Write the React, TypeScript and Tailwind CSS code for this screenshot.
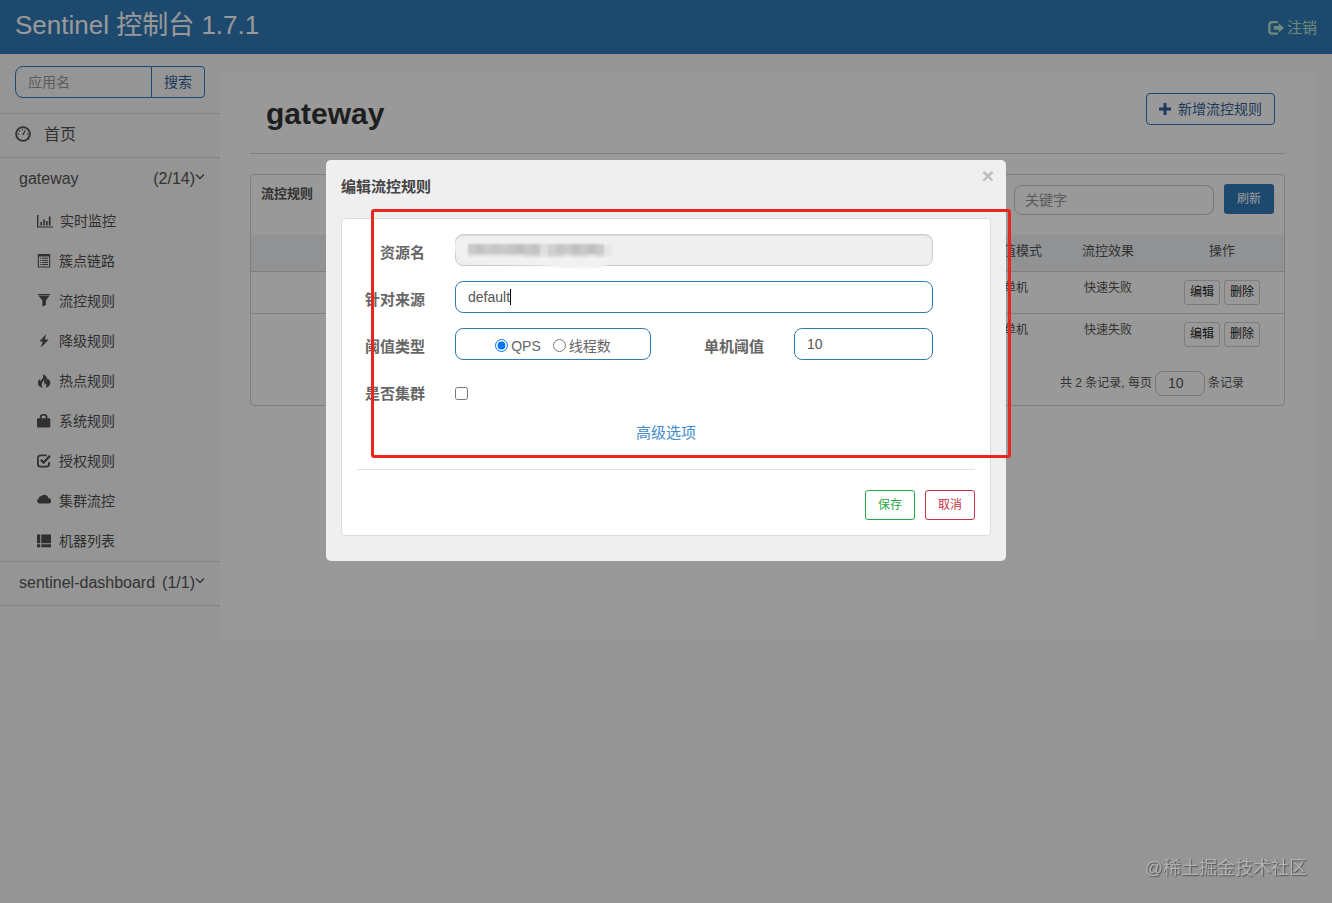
import type { ReactNode } from "react";

function Glyph({ children, className = "h-[14px] w-[14px]" }: { children: ReactNode; className?: string }) {
  return (
    <svg viewBox="0 0 14 14" className={`shrink-0 ${className}`} fill="currentColor" aria-hidden="true">
      {children}
    </svg>
  );
}

const menu: { label: string; icon: ReactNode }[] = [
  {
    label: "实时监控",
    icon: (
      <Glyph className="h-[14px] w-4">
        <path d="M-1 1h1.4v11.4H15v1H-1zM2.4 8h1.6v3.4H2.4zM5.2 5.6h1.6v5.8H5.2zM8 7h1.6v4.4H8zM10.8 2.4h1.8v9h-1.8z" />
      </Glyph>
    ),
  },
  {
    label: "簇点链路",
    icon: (
      <Glyph>
        <path fillRule="evenodd" d="M.8 0h12.4v13.600H.8zM1.9 2.4v10.100h10.2V2.4z" />
        <path d="M3 3.800h1.2v1H3zM5 3.800h6v1H5zM3 5.900h1.2v1H3zM5 5.900h6v1H5zM3 8h1.2v1H3zM5 8h6v1H5zM3 10.100h1.2v1H3zM5 10.100h6v1H5z" />
      </Glyph>
    ),
  },
  {
    label: "流控规则",
    icon: (
      <Glyph>
        <path d="M1.2 0h11.600v1.200H1.200zM1.600 1.700h10.800L8.900 6.500v4.400L5.400 12.600V6.500z" />
      </Glyph>
    ),
  },
  {
    label: "降级规则",
    icon: (
      <Glyph>
        <path d="M9.200 0 2.400 7.600h3.400L3.800 13.800l7.900-8.400H7.800z" />
      </Glyph>
    ),
  },
  {
    label: "热点规则",
    icon: (
      <Glyph>
        <path d="M6 0c3.900 1.800 4.500 4.400 3.400 6.900.7-.4 1-1.400.8-2.600C12.600 5.700 13.600 7.700 13.200 9.800c-.4 2.200-2.300 3.400-4.700 4.200 1.100-1.600 1.200-3.100.2-4.700-.4.900-.9 1.300-1.600 1.400.600-1.700.400-3.600-.700-5C6.200 7.500 4.700 8.700 4.800 10.800c0 1.200.5 2.200 1.300 3.200C2.900 13.300.8 11.500.9 9c0-1.500.7-2.700 1.900-3.900 0 1 .1 1.700.6 2.200C4.800 5.200 7.200 3.500 6 0z" />
      </Glyph>
    ),
  },
  {
    label: "系统规则",
    icon: (
      <Glyph>
        <path
          fillRule="evenodd"
          d="M2.800 4.200V3C2.800.9 4.300 0 5.600 0h2c1.500 0 2.900.9 2.900 3v1.200h1.600c.7 0 1.200.5 1.200 1.200v7c0 .7-.5 1.200-1.200 1.200H1.200C.5 13.600 0 13.100 0 12.400v-7c0-.7.5-1.200 1.200-1.200zM4.700 4.200h3.900V3c0-.9-.5-1.300-1.200-1.300H5.800c-.7 0-1.100.4-1.100 1.300z"
        />
      </Glyph>
    ),
  },
  {
    label: "授权规则",
    icon: (
      <Glyph>
        <path d="M9.800 1.300H3.600A2.700 2.700 0 0 0 .9 4v6a2.700 2.700 0 0 0 2.700 2.700h5.800a2.700 2.700 0 0 0 2.700-2.700V8" fill="none" stroke="currentColor" strokeWidth="1.800" />
        <path d="m3.800 5.800 2.800 2.800 6.400-6.800" fill="none" stroke="currentColor" strokeWidth="2.200" />
      </Glyph>
    ),
  },
  {
    label: "集群流控",
    icon: (
      <Glyph>
        <path d="M2.600 9.600A2.600 2.600 0 0 1 2 4.500 2.200 2.200 0 0 1 4.700 2a3.900 3.900 0 0 1 6.700 2.200A2.700 2.700 0 0 1 11.600 9.600z" />
      </Glyph>
    ),
  },
  {
    label: "机器列表",
    icon: (
      <Glyph>
        <path d="M0 .4h3.200v8.800H0zM4.300.4H14v8.800H4.300zM0 10.300h3.200v3H0zM4.300 10.300H14v3H4.300z" />
      </Glyph>
    ),
  },
];

function Chevron() {
  return (
    <svg viewBox="0 0 10 8" className="mb-1 h-2 w-[10px]" fill="none" stroke="currentColor" strokeWidth="1.300" aria-hidden="true">
      <path d="m1 1.500 4 4 4-4" />
    </svg>
  );
}

function AppRow({ name, count }: { name: string; count: string }) {
  return (
    <a href="#" className="flex h-[43px] items-center pr-[15px] pb-[2px] pl-[19px] text-base text-[#555]">
      <span>{name}</span>
      <span className="ml-auto">{count}</span>
      <Chevron />
    </a>
  );
}

function Sidebar() {
  return (
    <nav className="w-[220px] shrink-0">
      <form className="flex px-[15px] pt-3 pb-[15px]">
        <input
          aria-label="应用名"
          placeholder="应用名"
          className="h-8 w-0 flex-1 rounded-l-lg border border-[#337ab7] px-3 text-sm placeholder:text-[#999]"
        />
        <button type="button" className="-ml-px h-8 rounded-r border border-[#337ab7] px-3 text-sm text-[#2f6399]">
          搜索
        </button>
      </form>
      <a href="#" className="flex h-11 items-center gap-[13px] border-t border-[#dcdcdc] px-[15px] pb-[2px] text-base text-[#555]">
        <Glyph className="mb-[2px] h-4 w-4">
          <circle cx="7" cy="7" r="6" fill="none" stroke="currentColor" strokeWidth="1.700" />
          <path d="M6.300 7.700 8.500 3.500l.9.500-1.900 4.200zM2.500 6.500h1.200v1.100H2.500zM3.600 3.900h1.100V5H3.600zM6 2.700h1v1H6zM10.300 6.500h1.200v1.100h-1.200z" />
        </Glyph>
        首页
      </a>
      <div className="border-t border-[#dcdcdc]">
        <AppRow name="gateway" count="(2/14)" />
        <ul>
          {menu.map((m, i) => (
            <li key={m.label}>
              <a href="#" className={`flex h-10 items-center pl-[37px] text-sm text-[#505050] ${i === 0 ? "gap-[7px]" : "gap-2"}`}>
                {m.icon}
                {m.label}
              </a>
            </li>
          ))}
        </ul>
      </div>
      <div className="border-y border-[#dcdcdc]">
        <AppRow name="sentinel-dashboard" count="(1/1)" />
      </div>
    </nav>
  );
}

function RuleTable() {
  return (
    <table className="w-full table-fixed border-collapse text-center text-xs leading-[17px] text-[#555]">
      <colgroup>
        <col />
        <col className="w-20" />
        <col className="w-[104px]" />
        <col className="w-[124px]" />
      </colgroup>
      <thead className="bg-[#f0f4f6] text-[13px]">
        <tr className="h-9 border-b border-[#d4d4d4]">
          <td />
          <th className="pb-1 font-normal whitespace-nowrap">阈值模式</th>
          <th className="pb-1 font-normal">流控效果</th>
          <th className="pb-1 font-normal">操作</th>
        </tr>
      </thead>
      <tbody>
        {[0, 1].map((r) => (
          <tr key={r} className="border-b border-[#d4d4d4] align-top last:border-0">
            <td />
            <td className="py-2">单机</td>
            <td className="py-2">快速失败</td>
            <td className="py-2">
              <div className="flex justify-center gap-1">
                {["编辑", "删除"].map((b) => (
                  <button key={b} type="button" className="h-[25px] rounded-[3px] border border-[#d0d0d0] px-[5px] text-xs text-[#222]">
                    {b}
                  </button>
                ))}
              </div>
            </td>
          </tr>
        ))}
      </tbody>
    </table>
  );
}

function Main() {
  return (
    <main className="mt-[18px] mr-4 min-h-[568px] min-w-0 flex-1 self-start bg-white pr-[31px] pl-[30px]">
      <div className="flex items-start justify-between border-b border-[#d8d8d8] pt-[21px] pr-[10px] pb-[21px] pl-4">
        <h1 className="pt-[3px] text-[30px] leading-9 font-bold text-[#333]">gateway</h1>
        <button type="button" className="flex h-8 items-center gap-[7px] rounded border border-[#337ab7] px-3 text-sm text-[#2f6399]">
          <Glyph className="h-3 w-3">
            <path d="M5.300 0h3.400v5.300H14v3.400H8.700V14H5.300V8.700H0V5.300h5.300z" />
          </Glyph>
          新增流控规则
        </button>
      </div>
      <section className="mt-5 rounded border border-[#d4d4d4]">
        <div className="flex h-[60px] items-start px-[10px] pt-[9px]">
          <h2 className="text-[13px] leading-5 font-bold text-[#555]">流控规则</h2>
          <input
            aria-label="关键字"
            placeholder="关键字"
            className="mt-px mr-[10px] ml-auto h-[30px] w-[200px] rounded-lg border border-[#c8c8c8] px-[10px] text-sm placeholder:text-[#999]"
          />
          <button type="button" className="h-[30px] w-[50px] rounded-[3px] bg-[#337ab7] text-xs text-white">
            刷新
          </button>
        </div>
        <RuleTable />
        <div className="flex items-center justify-end gap-[3px] pt-4 pr-10 pb-[9px] text-xs text-[#555]">
          <label htmlFor="page-size">共 2 条记录, 每页</label>
          <input id="page-size" defaultValue="10" className="h-[25px] w-[50px] rounded-lg border border-[#c8c8c8] px-3 text-sm" />
          <span>条记录</span>
        </div>
      </section>
    </main>
  );
}

const mosaic = [
  "#c9c9c9", "#c2c2c2", "#cbcbcb", "#c6c6c6", "#c9c9c9", "#c4c4c4", "#bebebe", "#c8c8c8", "#c3c3c3", "#dedede",
  "#cfcfcf", "#c5c5c5", "#c9c9c9", "#c0c0c0", "#c7c7c7", "#bfbfbf", "#c9c9c9",
];

function MaskedValue() {
  return (
    <svg viewBox="0 0 170 36" className="pointer-events-none absolute top-0 left-0 h-9 w-[170px]" aria-hidden="true">
      <defs>
        <filter id="soft" x="-10%" y="-30%" width="120%" height="160%">
          <feGaussianBlur stdDeviation="0.900" />
        </filter>
      </defs>
      <path d="M-1 9C4 4 10 6 14 7h138q6 2 5 12c-1 9-6 14-14 15-18 1-38 0-60-3L10 28Q-1 24-1 9z" fill="#f1f1f1" filter="url(#soft)" />
      <g filter="url(#soft)">
        {mosaic.map((c, i) => (
          <g key={i}>
            <rect x={13 + i * 8} y="10" width="8" height="12" fill={c} />
            <rect x={13 + i * 8} y="20" width="8" height="3" fill={i > 5 && i % 3 ? "#d6d6d6" : "#e2e2e2"} />
          </g>
        ))}
        <rect x="149" y="11" width="8" height="12" fill="#e6e6e6" />
      </g>
    </svg>
  );
}

const labelClass = "w-[68px] shrink-0 pt-2 text-right text-[15px] leading-[22px] font-bold whitespace-nowrap text-[#666]";
const fieldClass = "h-8 w-full rounded-lg border border-[#337ab7] bg-white px-3 text-sm text-[#555]";

function EditDialog() {
  return (
    <div
      role="dialog"
      aria-labelledby="dialog-title"
      className="relative mx-auto mt-40 w-[680px] max-w-full rounded-[5px] bg-[#efefef] px-[15px] pb-[25px]"
    >
      <div className="flex h-[58px] items-start justify-between">
        <h2 id="dialog-title" className="pt-4 text-[15px] leading-[22px] font-bold text-[#444]">
          编辑流控规则
        </h2>
        <button type="button" aria-label="关闭" className="mt-[6px] mr-[-3px] text-[21px] leading-5 font-bold text-[#bdbdbd]">
          ×
        </button>
      </div>
      <form className="rounded border border-[#dcdcdc] bg-white p-[15px]">
        <div className="flex flex-col gap-[15px] pr-[42px]">
          <div className="flex gap-[30px]">
            <label htmlFor="resource" className={labelClass}>资源名</label>
            <div className="relative flex-1">
              <input id="resource" readOnly className="h-8 w-full rounded-lg border border-[#ccc] bg-[#eee] px-3 text-sm shadow-[inset_0_1px_1px_rgba(0,0,0,0.075)]" />
              <MaskedValue />
            </div>
          </div>
          <div className="flex gap-[30px]">
            <label htmlFor="origin" className={labelClass}>针对来源</label>
            <div className="relative flex-1">
              <input id="origin" defaultValue="default" className={fieldClass} />
              <span className="absolute top-2 left-[55px] h-4 w-px bg-black" />
            </div>
          </div>
          <div className="flex gap-[30px]">
            <span className={labelClass}>阈值类型</span>
            <div className="flex flex-1 items-start justify-between">
              <div role="radiogroup" aria-label="阈值类型" className="flex h-8 w-[196px] items-center justify-center gap-3 rounded-lg border border-[#337ab7] pt-1 text-sm text-[#666]">
                <label className="flex items-center gap-[3px]">
                  <input type="radio" name="grade" defaultChecked className="mb-[2px] h-[13px] w-[13px]" />
                  QPS
                </label>
                <label className="flex items-center gap-[3px]">
                  <input type="radio" name="grade" className="mb-[2px] h-[13px] w-[13px]" />
                  线程数
                </label>
              </div>
              <div className="flex gap-[30px]">
                <label htmlFor="threshold" className={labelClass}>单机阈值</label>
                <div className="w-[139px]">
                  <input id="threshold" defaultValue="10" className={fieldClass} />
                </div>
              </div>
            </div>
          </div>
          <div className="flex h-8 gap-[30px]">
            <label htmlFor="cluster" className={labelClass}>是否集群</label>
            <input id="cluster" type="checkbox" className="mt-3 h-[13px] w-[13px]" />
          </div>
        </div>
        <div className="border-b border-[#e2e2e2] pt-[15px] pb-[25px] text-center text-[15px] leading-[22px]">
          <a href="#" className="text-[#428bca]">高级选项</a>
        </div>
        <div className="mt-5 flex justify-end gap-[10px]">
          <button type="button" className="h-[30px] w-[50px] rounded-[3px] border border-[#28a745] text-xs text-[#28a745]">
            保存
          </button>
          <button type="button" className="h-[30px] w-[50px] rounded-[3px] border border-[#c9304a] text-xs text-[#c9304a]">
            取消
          </button>
        </div>
      </form>
      <div className="pointer-events-none absolute top-[49px] -right-[5px] bottom-[103px] left-[45px] rounded-[3px] border-3 border-[#e8261d]" />
    </div>
  );
}

export default function App() {
  return (
    <div className="min-h-screen bg-[#f8f8f8] font-['Liberation_Sans','Noto_Sans_CJK_SC',sans-serif]">
      <header className="flex h-[54px] items-center justify-between bg-[#337ab7] px-[15px]">
        <a href="#" className="pb-1 text-[26px] leading-8 text-white">
          Sentinel 控制台 1.7.1
        </a>
        <a href="#" className="flex items-center gap-[3px] pt-[2px] text-[15px] text-[#b9e6cb]">
          <Glyph className="h-4 w-4">
            <path d="M8.600 1.900H3.800Q1.200 1.900 1.200 4.500v4.800q0 2.600 2.600 2.600H8.600" fill="none" stroke="currentColor" strokeWidth="2.100" />
            <path d="M9.400 2.800 14 6.900l-4.600 4.100V8.600H5V5.200h4.400z" />
          </Glyph>
          注销
        </a>
      </header>
      <div className="flex items-start">
        <Sidebar />
        <Main />
      </div>
      <div className="fixed inset-0 z-10 overflow-auto bg-black/40">
        <EditDialog />
      </div>
      <div className="fixed right-[25px] bottom-[22px] z-20 text-lg leading-[26px] text-[#b2b2b2] [text-shadow:1px_1px_1px_#555]">
        @稀土掘金技术社区
      </div>
    </div>
  );
}
